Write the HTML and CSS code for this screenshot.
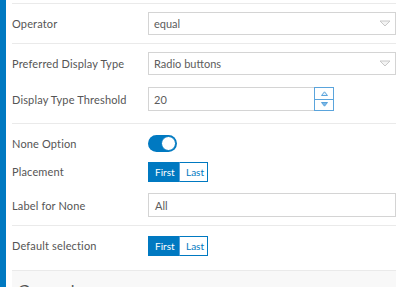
FILE: index.html
```html
<!DOCTYPE html>
<html lang="en">
<head>
    <meta charset="UTF-8">
    <meta name="viewport" content="width=device-width, initial-scale=1.0">
    <title>Filter settings</title>
    <link rel="stylesheet" href="styles.css">
</head>
<body>
    <div class="panel">
        <div class="content">
            <div class="section">
                <div class="row">
                    <label class="label">Operator</label>
                    <div class="select">
                        <span>equal</span>
                        <svg class="caret" width="12" height="7" viewBox="0 0 12 7"><path d="M1 1 L11 1 L6 6 Z" fill="#f4f4f4" stroke="#c8c8c8" stroke-width="1"/></svg>
                    </div>
                </div>
            </div>

            <div class="section section-display">
                <div class="row">
                    <label class="label">Preferred Display Type</label>
                    <div class="select">
                        <span>Radio buttons</span>
                        <svg class="caret" width="12" height="7" viewBox="0 0 12 7"><path d="M1 1 L11 1 L6 6 Z" fill="#f4f4f4" stroke="#c8c8c8" stroke-width="1"/></svg>
                    </div>
                </div>
                <div class="row">
                    <label class="label">Display Type Threshold</label>
                    <div class="number">
                        <div class="number-input">20</div>
                        <div class="spinner">
                            <div class="spin">
                                <svg width="7" height="5" viewBox="0 0 7 5"><path d="M0.5 4.5 L3.5 0.8 L6.5 4.5 Z" fill="#e6f1fa" stroke="#5aa4dc" stroke-width="1"/></svg>
                            </div>
                            <div class="spin">
                                <svg width="7" height="5" viewBox="0 0 7 5"><path d="M0.5 0.5 L6.5 0.5 L3.5 4.2 Z" fill="#7db7e4" stroke="#5aa4dc" stroke-width="1"/></svg>
                            </div>
                        </div>
                    </div>
                </div>
            </div>

            <div class="section section-none">
                <div class="row">
                    <label class="label">None Option</label>
                    <div class="toggle"><span class="knob"></span></div>
                </div>
                <div class="row row-placement">
                    <label class="label">Placement</label>
                    <div class="seg">
                        <button class="seg-btn active">First</button>
                        <button class="seg-btn">Last</button>
                    </div>
                </div>
                <div class="row row-text">
                    <label class="label">Label for None</label>
                    <div class="text-input">All</div>
                </div>
            </div>

            <div class="section section-default">
                <div class="row">
                    <label class="label">Default selection</label>
                    <div class="seg">
                        <button class="seg-btn active">First</button>
                        <button class="seg-btn">Last</button>
                    </div>
                </div>
            </div>

            <div class="group-header">General</div>
        </div>
    </div>
</body>
</html>
```

FILE: styles.css
```css
:root {
    --blue: #0079c1;
    --line: #eaeaea;
    --field-border: #d4d4d4;
    --label-color: #555555;
    --field-color: #5c5c5c;
}

* {
    margin: 0;
    padding: 0;
    box-sizing: border-box;
}

body {
    font-family: 'Lato', 'Liberation Sans', sans-serif;
    background: #ffffff;
    color: var(--label-color);
    width: 400px;
    height: 287px;
    overflow: hidden;
}

.panel {
    border-left: 6px solid var(--blue);
    height: 287px;
    overflow: hidden;
    padding: 3px 4px 0 6px;
}

.section {
    border-top: 1px solid var(--line);
    padding: 8px 0;
    display: flex;
    flex-direction: column;
}

.section-display {
    gap: 12px;
    padding-bottom: 12px;
}

.section-none {
    padding-bottom: 8px;
}

.section-default {
    padding: 8px 0 13px;
}

.row {
    display: flex;
    align-items: center;
    min-height: 23px;
}

.row-placement {
    margin-top: 5px;
}

.row-text {
    margin-top: 10px;
}

.label {
    width: 136px;
    flex-shrink: 0;
    font-size: 11px;
    letter-spacing: 0.15px;
    color: var(--label-color);
}

.select {
    flex: 1;
    height: 23px;
    border: 1px solid var(--field-border);
    display: flex;
    align-items: center;
    justify-content: space-between;
    padding: 0 4px 0 5px;
    font-size: 11px;
    color: var(--field-color);
}

.caret {
    display: block;
}

.number {
    display: flex;
    height: 24px;
}

.number-input {
    width: 166px;
    border: 1px solid var(--field-border);
    border-right: none;
    font-size: 11px;
    color: var(--field-color);
    display: flex;
    align-items: center;
    padding-left: 5px;
}

.spinner {
    width: 20px;
    display: flex;
    flex-direction: column;
}

.spin {
    flex: 1;
    border: 1px solid #5aa4dc;
    display: flex;
    align-items: center;
    justify-content: center;
    background: #fff;
}

.spin + .spin {
    border-top: none;
}

.spin svg {
    display: block;
}

.toggle {
    width: 29px;
    height: 17px;
    border-radius: 9px;
    background: var(--blue);
    position: relative;
}

.knob {
    position: absolute;
    right: 1px;
    top: 1px;
    width: 15px;
    height: 15px;
    border-radius: 50%;
    background: #fff;
    border: 1px solid var(--blue);
}

.seg {
    display: flex;
}

.seg-btn {
    font-family: inherit;
    font-size: 10px;
    height: 20px;
    padding: 0 6px;
    background: #fff;
    color: var(--blue);
    border: 1px solid var(--blue);
    cursor: pointer;
}

.seg-btn.active {
    background: var(--blue);
    color: #fff;
    width: 31px;
}

.seg-btn + .seg-btn {
    border-left: 1px solid #5aa4dc;
    width: 29px;
}

.text-input {
    flex: 1;
    height: 24px;
    border: 1px solid var(--field-border);
    display: flex;
    align-items: center;
    padding-left: 6px;
    font-size: 11px;
    color: var(--field-color);
}

.group-header {
    border-top: 1px solid var(--line);
    background: #f8f8f8;
    padding: 9px 6px;
    font-size: 16px;
    color: var(--label-color);
    letter-spacing: 0.3px;
}
```
